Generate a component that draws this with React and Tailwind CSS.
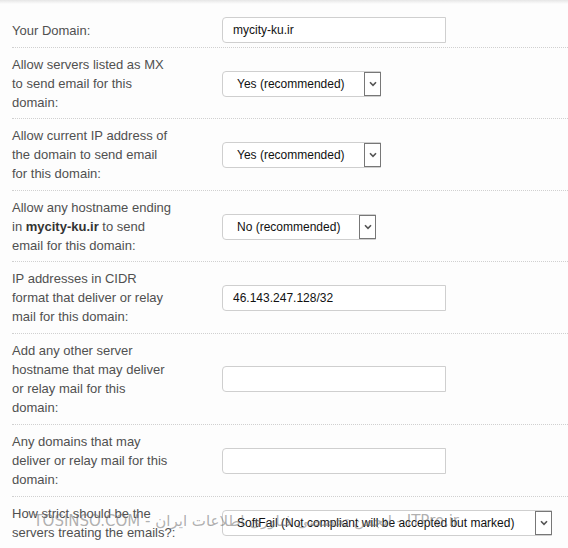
import React from "react";

const Chevron = () => (
  <svg width="8" height="6" viewBox="0 0 8 6" fill="none">
    <path d="M1 1.2 L4 4.3 L7 1.2" stroke="#555" strokeWidth="1.6" />
  </svg>
);

function TextBox({ value }) {
  return (
    <div className="h-[26px] w-[224px] border border-[#cfcfcf] rounded-l-[4px] bg-white flex items-center pl-[10px] text-[12px] text-[#111]">
      {value}
    </div>
  );
}

function Select({ value, width }) {
  return (
    <div
      className="h-[26px] border border-[#cfcfcf] rounded-l-[4px] bg-white flex items-center justify-between text-[12px] text-[#111]"
      style={{ width }}
    >
      <span className="pl-[14px] whitespace-nowrap">{value}</span>
      <span className="h-[24px] w-[17px] border border-[#777] flex items-center justify-center bg-white -mr-px">
        <Chevron />
      </span>
    </div>
  );
}

function Row({ lines, children, pb = "pb-[7px]" }) {
  return (
    <div className={`flex items-center ml-[12px] pt-[7px] ${pb} border-b border-dotted border-[#d0d0d0]`}>
      <div className="w-[210px] shrink-0 text-[13px] leading-[19px] text-[#505050] whitespace-nowrap">
        {lines.map((l, i) => (
          <div key={i}>{l}</div>
        ))}
      </div>
      <div className="flex items-center">{children}</div>
    </div>
  );
}

export default function App() {
  return (
    <div
      className="relative w-[568px] h-[548px] overflow-hidden bg-[#fdfdfd]"
      style={{ fontFamily: '"Liberation Sans", Arial, sans-serif' }}
    >
      <div className="h-[4px] bg-gradient-to-b from-[#e6e6e6] to-[#fdfdfd]" />
      <div className="flex items-center ml-[12px] pt-[13px] pb-[4px] border-b border-dotted border-[#d0d0d0]">
        <div className="w-[210px] shrink-0 text-[13px] leading-[19px] text-[#505050]">Your Domain:</div>
        <TextBox value="mycity-ku.ir" />
      </div>
      <Row pb="pb-[6px]" lines={["Allow servers listed as MX", "to send email for this", "domain:"]}>
        <Select value="Yes (recommended)" width="159px" />
      </Row>
      <Row lines={["Allow current IP address of", "the domain to send email", "for this domain:"]}>
        <Select value="Yes (recommended)" width="159px" />
      </Row>
      <Row
        pb="pb-[6px]"
        lines={[
          "Allow any hostname ending",
          <>
            in <b className="text-[#333]">mycity-ku.ir</b> to send
          </>,
          "email for this domain:",
        ]}
      >
        <Select value="No (recommended)" width="154px" />
      </Row>
      <Row lines={["IP addresses in CIDR", "format that deliver or relay", "mail for this domain:"]}>
        <TextBox value="46.143.247.128/32" />
      </Row>
      <Row lines={["Add any other server", "hostname that may deliver", "or relay mail for this", "domain:"]}>
        <TextBox value="" />
      </Row>
      <Row lines={["Any domains that may", "deliver or relay mail for this", "domain:"]}>
        <TextBox value="" />
      </Row>
      <Row lines={["How strict should be the", "servers treating the emails?:"]}>
        <Select value="SoftFail (Not compliant will be accepted but marked)" width="330px" />
      </Row>

      <div
        dir="rtl"
        className="absolute left-[22px] top-[511px] w-[437px] whitespace-nowrap text-[15px] leading-[20px] text-[rgba(110,110,110,0.55)]"
        style={{ fontFamily: '"DejaVu Sans", "Liberation Sans", sans-serif' }}
      >
        ITPro.ir - انجمن تخصصی فناوری اطلاعات ایران - TOSINSO.COM
      </div>
    </div>
  );
}
